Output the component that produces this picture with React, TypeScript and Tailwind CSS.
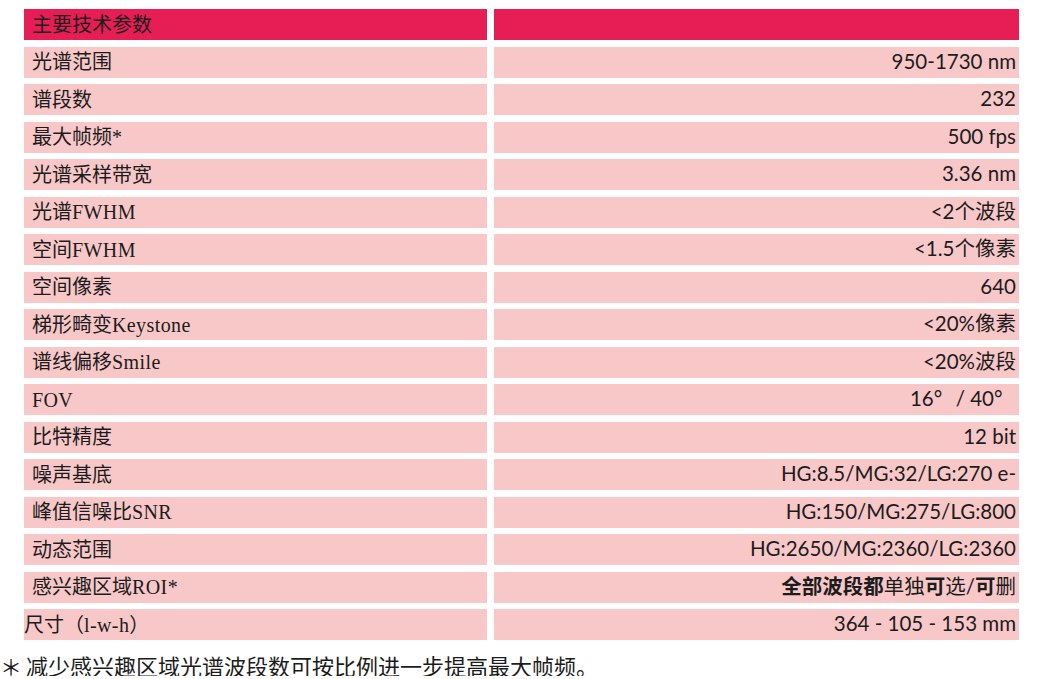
import React from "react";

type Row = { label: React.ReactNode; value: React.ReactNode; flush?: boolean };

const latin = (s: string) => <span className="font-['Liberation_Serif',serif] tracking-[0.4px]">{s}</span>;

const deg = <span className="inline-block w-[22px] text-left">°</span>;

const ROWS: Row[] = [
  { label: "光谱范围", value: "950-1730 nm" },
  { label: "谱段数", value: "232" },
  { label: "最大帧频*", value: "500 fps" },
  { label: "光谱采样带宽", value: "3.36 nm" },
  { label: <>光谱{latin("FWHM")}</>, value: "<2个波段" },
  { label: <>空间{latin("FWHM")}</>, value: "<1.5个像素" },
  { label: "空间像素", value: "640" },
  { label: <>梯形畸变{latin("Keystone")}</>, value: "<20%像素" },
  { label: <>谱线偏移{latin("Smile")}</>, value: "<20%波段" },
  { label: latin("FOV"), value: <>16{deg}/ 40{deg}</> },
  { label: "比特精度", value: "12 bit" },
  { label: "噪声基底", value: "HG:8.5/MG:32/LG:270 e-" },
  { label: <>峰值信噪比{latin("SNR")}</>, value: "HG:150/MG:275/LG:800" },
  { label: "动态范围", value: "HG:2650/MG:2360/LG:2360" },
  { label: <>感兴趣区域{latin("ROI*")}</>, value: (
    <>
      <b className="font-bold">全部波段都</b>单独<b className="font-bold">可</b>选/<b className="font-bold">可</b>删
    </>
  ) },
  { label: <>尺寸（{latin("l-w-h")}）</>, value: "364 - 105 - 153 mm", flush: true },
];

export default function App() {
  return (
    <div className="w-[1040px] bg-white text-[#1c1c1c]">
      <div className="grid grid-cols-[463px_525px] gap-x-[7px] gap-y-[6.5px] pl-[24px] pt-[9px]">
        <div className="h-[31px] bg-[#e71d55] flex items-center pl-[8px] text-[20px] font-['Liberation_Serif','Noto_Sans_CJK_SC',serif]">
          主要技术参数
        </div>
        <div className="h-[31px] bg-[#e71d55]" />
        {ROWS.map((r, i) => (
          <React.Fragment key={i}>
            <div
              className={`h-[31px] bg-[#f8c8c9] flex items-center text-[20px] font-['Liberation_Serif','Noto_Sans_CJK_SC',serif] whitespace-nowrap ${r.flush ? "pl-0" : "pl-[8px]"}`}
            >
              {r.label}
            </div>
            <div className="h-[31px] bg-[#f8c8c9] flex items-center justify-end pr-[3px] pb-[2px] text-[20.5px] font-['Lato','Noto_Sans_CJK_SC',sans-serif] whitespace-nowrap">
              {r.value}
            </div>
          </React.Fragment>
        ))}
      </div>
      <p className="mt-[14px] text-[22px] leading-[22px] font-['Noto_Sans_CJK_SC',sans-serif] whitespace-nowrap">
        <span className="inline-block w-[26px]">＊</span>减少感兴趣区域光谱波段数可按比例进一步提高最大帧频。
      </p>
    </div>
  );
}
